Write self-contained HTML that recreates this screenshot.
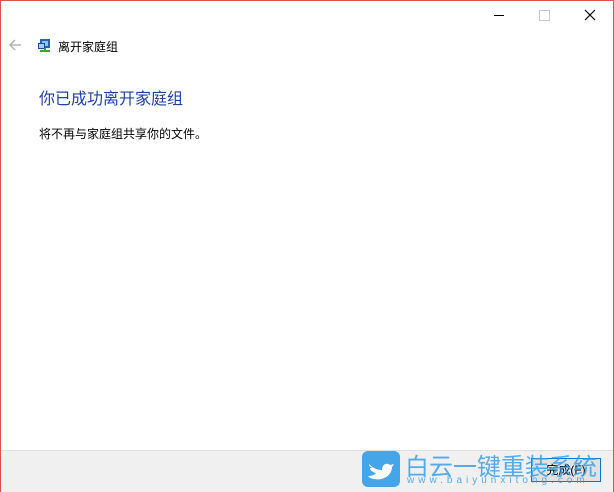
<!DOCTYPE html>
<html><head><meta charset="utf-8"><style>
body{margin:0;width:614px;height:492px;overflow:hidden;font-family:"Liberation Sans","Microsoft YaHei","Noto Sans CJK SC",sans-serif;background:#fff;}
.win{position:absolute;left:0;top:0;width:612px;height:490px;border:1px solid #d9534f;background:#fff;}
.t{position:absolute;white-space:nowrap;}
.foot{position:absolute;left:1px;top:450px;width:612px;height:41px;background:#f0f0f0;border-top:1px solid #dfdfdf;}
.btn{position:absolute;left:531px;top:458px;width:68px;height:22px;border:1px solid #0078d7;background:#e1e1e1;font-size:12px;text-align:center;line-height:22px;}
</style></head><body>
<div class="win"></div>
<div style="position:absolute;left:494px;top:15px;width:10px;height:1px;background:#000"></div>
<div style="position:absolute;left:539px;top:10px;width:9px;height:9px;border:1px solid #c8c8c8"></div>
<svg style="position:absolute;left:584px;top:9px" width="12" height="12"><path d="M1 1L11 11M11 1L1 11" stroke="#000" stroke-width="1.2"/></svg>
<svg style="position:absolute;left:8px;top:39px" width="14" height="12"><path d="M13 6H2M7 1L2 6L7 11" stroke="#b4b4b4" stroke-width="1.5" fill="none"/></svg>
<svg style="position:absolute;left:37px;top:38px" width="16" height="16"><rect x="3" y="1" width="10" height="9" fill="#2b5fb7"/><rect x="5" y="3" width="6" height="5" fill="#8fc3f0"/><rect x="1" y="5" width="7" height="6" fill="#1d4b9a"/><rect x="2" y="6" width="5" height="4" fill="#9fd0ff"/><rect x="3" y="12" width="10" height="2" fill="#3aa63a"/><rect x="7" y="10" width="2" height="3" fill="#3aa63a"/></svg>
<div class="t" style="left:58px;top:38px;font-size:12px;color:#000">离开家庭组</div>
<div class="t" style="left:39px;top:85px;font-size:16px;color:#1f3fa6">你已成功离开家庭组</div>
<div class="t" style="left:39px;top:125px;font-size:12px;color:#000">将不再与家庭组共享你的文件。</div>
<div class="foot"></div>
<div class="btn">完成(F)</div>
<div style="position:absolute;left:362px;top:451px;width:38px;height:36px;background:#3aa0e8;border-radius:6px;opacity:.95"></div>
<svg style="position:absolute;left:366px;top:456px" width="30" height="26"><path d="M3 8C8 13 12 14 16 14C16 9 20 6 24 9L28 8L26 11C26 18 19 25 8 23C5 23 3 21 2 20C6 20 8 19 10 17C6 16 4 14 4 12C5 12 6 12 7 12C4 11 3 10 3 8Z" fill="#fff"/></svg>
<div class="t" style="left:405px;top:447px;font-size:24px;color:#3aa0e8;opacity:.85">白云一键重装系统</div>
<div class="t" style="left:407px;top:475px;font-size:10px;color:#3aa0e8;letter-spacing:4px;opacity:.85">www.baiyunxitong.com</div>
</body></html>
